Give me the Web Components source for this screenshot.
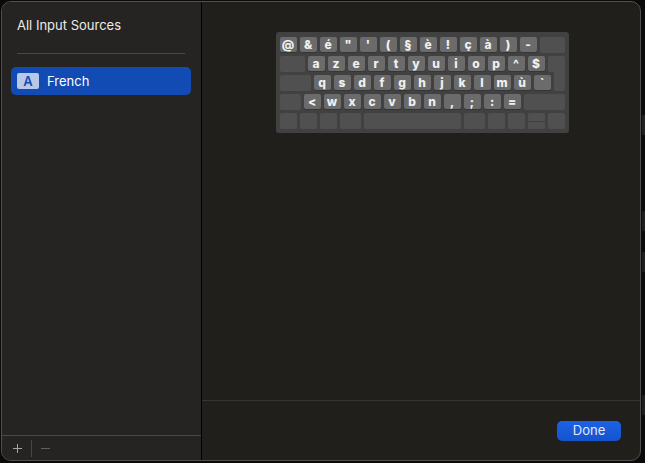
<!DOCTYPE html>
<html lang="en">
<head>
<meta charset="utf-8">
<title>Input Sources</title>
<style>
html, body { margin: 0; height: 100%; }
body {
  box-sizing: border-box;
  display: flex;
  padding: 1px 4px 2px 1px;
  font: 13px/16px Inter, "Liberation Sans", sans-serif;
  color: #ebebea;
  background:
    linear-gradient(#0000 115px, #202021 115px 135px, #0000 135px 211px, #1e1e1f 211px 231px, #0000 231px 252px, #1e1e1f 252px 272px, #0000 272px 395px, #1e1e1f 395px 415px, #0000 415px) right top / 3px 100% no-repeat,
    #0a0a0a;
}
</style>
</head>
<body>
<input-sources-dialog></input-sources-dialog>
<script>
function define(name, html, setup) {
  const template = document.createElement('template');
  template.innerHTML = html;
  customElements.define(name, class extends HTMLElement {
    connectedCallback() {
      if (this.shadowRoot) return;
      this.attachShadow({ mode: 'open' }).append(template.content.cloneNode(true));
      if (setup) setup(this.shadowRoot, this);
    }
  });
}

define('key-cap', `
<style>
:host {
  display: block; box-sizing: border-box; flex: 0 0 17px; height: 16px;
  border-radius: 2px; background: #505050;
  font-size: 12px; font-weight: 800; line-height: 16px; text-align: center; color: #f0f0f0;
}
:host([letter]) { height: 15px; background: #6b6b6b; box-shadow: 0 1px 0 #353535; }
:host([size="s"]) { flex-basis: 11px; }
:host([size="m"]) { flex-basis: 21px; }
:host([size="l"]) { flex-basis: 25px; }
:host([size="xl"]) { flex-basis: 31px; }
:host([size="shift"]) { flex-basis: 41px; }
:host([size="space"]) { flex-basis: 97px; }
:host([part-of="return-top"]) { border-bottom-right-radius: 0; }
:host([part-of="return-bottom"]) { height: 20px; margin-top: -4px; border-top-left-radius: 0; border-top-right-radius: 0; }
:host([split]) { background: linear-gradient(#505050 8px, #3f3f3f 8px 9px, #505050 9px); }
</style><slot></slot>`);

define('keyboard-preview', `
<style>
:host { display: grid; gap: 3px; width: max-content; padding: 5px 4px 4px; border-radius: 3px; background: #414141; }
.row { display: flex; gap: 3px; height: 16px; }
</style>`, root => {
  const rows = [
    [...'@&é"\'(§è!çà)-', { size: 'l' }],
    [{ size: 'l' }, ...'azertyuiop^$', { 'part-of': 'return-top' }],
    [{ size: 'xl' }, ...'qsdfghjklmù`', { size: 's', 'part-of': 'return-bottom' }],
    [{ size: 'm' }, ...'<wxcvbn,;:=', { size: 'shift' }],
    [{}, {}, {}, { size: 'm' }, { size: 'space' }, { size: 'm' }, {}, {}, { split: '' }, {}]
  ];
  for (const keys of rows) {
    const row = document.createElement('div');
    row.className = 'row';
    for (const key of keys) {
      const cap = document.createElement('key-cap');
      if (typeof key === 'string') {
        cap.setAttribute('letter', '');
        cap.textContent = key;
      } else {
        for (const [name, value] of Object.entries(key)) cap.setAttribute(name, value);
      }
      row.append(cap);
    }
    root.append(row);
  }
});

define('source-item', `
<style>
:host { display: block; }
button {
  display: flex; align-items: center; gap: 8px; box-sizing: border-box; width: 100%;
  height: 28px; padding: 0 6px; border: 0; border-radius: 5px;
  background: #134bb5; color: #fff; font: inherit; text-align: left;
}
.badge {
  width: 22px; height: 16px; border-radius: 2px; background: #b8c8e9; color: #134bb5;
  font-weight: 600; line-height: 16px; text-align: center;
}
</style>
<button type="button" aria-pressed="true"><span class="badge">A</span><slot></slot></button>`);

define('source-toolbar', `
<style>
:host { display: flex; align-items: center; height: 24px; border-top: 1px solid #484846; }
button { box-sizing: border-box; display: grid; place-items: center; width: 29px; height: 24px; padding: 1px 0 0 2px; border: 0; background: none; color: #a5a5a3; }
button:disabled { padding: 1px 2px 0 0; color: #60605e; }
.line { width: 1px; height: 17px; background: #484846; }
svg { display: block; width: 9px; height: 9px; fill: currentColor; }
</style>
<button type="button" aria-label="Add"><svg viewBox="0 0 9 9"><path d="M4 0h1v4h4v1H5v4H4V5H0V4h4z"/></svg></button>
<span class="line"></span>
<button type="button" aria-label="Remove" disabled><svg viewBox="0 0 9 9"><path d="M0 4h9v1H0z"/></svg></button>`);

define('source-sidebar', `
<style>
:host { display: flex; flex-direction: column; flex: 0 0 199px; background: #252422; border-right: 1px solid #000; }
h1 { margin: 0 16px 0 15px; padding: 15px 0 20px; border-bottom: 1px solid #484846; font: inherit; }
.list { flex: 1; padding: 13px 10px 13px 9px; }
</style>
<h1>All Input Sources</h1>
<div class="list"><source-item>French</source-item></div>
<source-toolbar></source-toolbar>`);

define('done-button', `
<style>
:host { display: block; }
button {
  display: block; width: 64px; height: 20px; padding: 0 0 2px; border: 0; border-radius: 5px;
  background: linear-gradient(#1c62e4, #1453cc); color: #e3e9f8; font: inherit; line-height: 18px;
}
</style><button type="button"><slot></slot></button>`);

define('input-sources-dialog', `
<style>
:host {
  display: flex; flex: 1; box-sizing: border-box; overflow: hidden;
  border: 1px solid #50504e; border-radius: 10px; background: #201f1b;
}
main { display: flex; flex: 1; flex-direction: column; min-width: 0; }
.preview { display: flex; flex: 1; justify-content: center; align-items: flex-start; padding: 30px 0 30px 2px; }
footer { display: flex; justify-content: flex-end; padding: 20px 19px 19px; border-top: 1px solid #353430; }
</style>
<source-sidebar></source-sidebar>
<main>
  <div class="preview"><keyboard-preview></keyboard-preview></div>
  <footer><done-button>Done</done-button></footer>
</main>`);
</script>
</body>
</html>
